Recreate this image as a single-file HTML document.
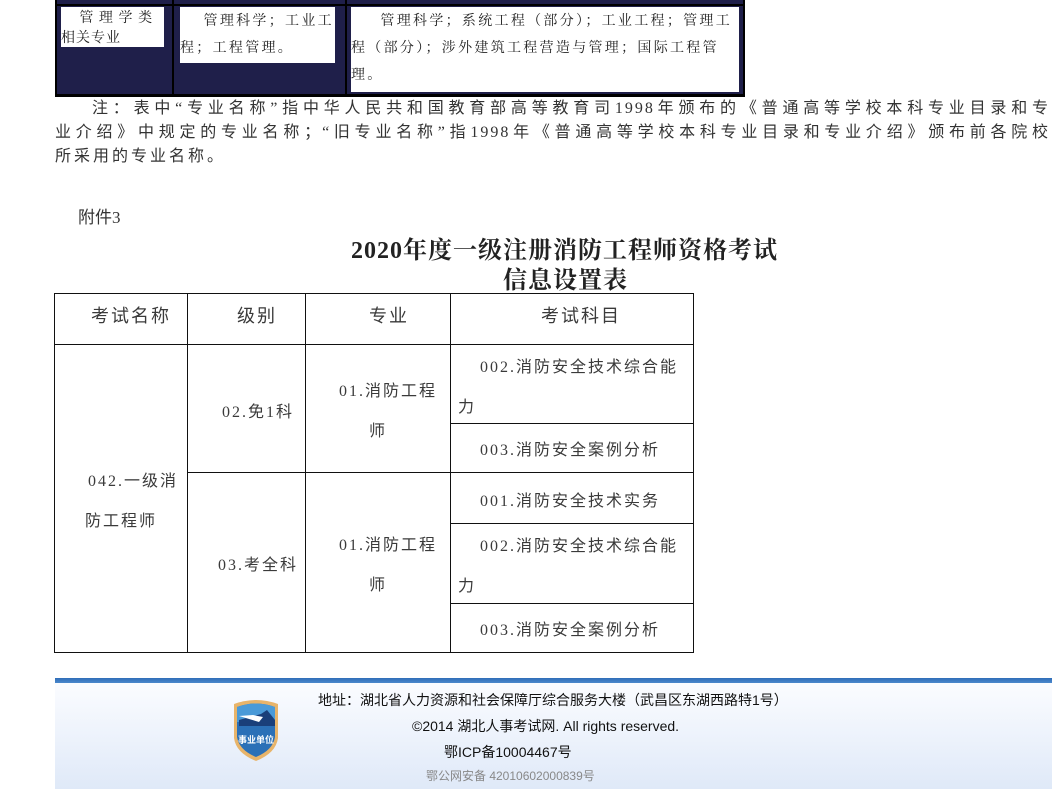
<!DOCTYPE html>
<html><head><meta charset="utf-8"><style>
*{margin:0;padding:0;box-sizing:border-box}
body{width:1059px;height:789px;background:#fff;position:relative;overflow:hidden;font-family:"Liberation Serif","Noto Sans CJK SC",serif;color:#333}
.a{position:absolute;white-space:nowrap}
.t{font-size:16px;letter-spacing:2px;color:#3a3a3a}
.l{position:absolute;background:#111}
.s{font-size:14px;letter-spacing:2.3px;color:#222;font-family:"Noto Serif CJK SC",serif}
.n{position:absolute;left:55px;font-size:16px;letter-spacing:2px;color:#333;text-align:justify;text-align-last:justify;white-space:nowrap;line-height:24px}
</style></head><body>
<div class="a" style="left:55px;top:0;width:690px;height:97px;background:#1f1f4a"></div>
<div class="a" style="left:55px;top:94px;width:690px;height:3px;background:#000"></div>
<div class="a" style="left:55px;top:4px;width:690px;height:2px;background:#000"></div>
<div class="a" style="left:55px;top:0;width:2px;height:97px;background:#000"></div>
<div class="a" style="left:172px;top:0;width:2px;height:97px;background:#000"></div>
<div class="a" style="left:345px;top:0;width:2px;height:97px;background:#000"></div>
<div class="a" style="left:743px;top:0;width:2px;height:97px;background:#000"></div>
<div class="a s" style="left:61px;top:7px;width:103px;height:40px;background:#fff;line-height:20px;letter-spacing:1px">&nbsp;&nbsp;&nbsp;&nbsp;管 理 学 类<br>相关专业</div>
<div class="a s" style="left:180px;top:7px;width:155px;height:56px;background:#fff;line-height:27px">&nbsp;&nbsp;&nbsp;&nbsp;管理科学；工业工<br>程；工程管理。</div>
<div class="a s" style="left:351px;top:7px;width:388px;height:85px;background:#fff;line-height:27px;overflow:hidden">&nbsp;&nbsp;&nbsp;&nbsp;&nbsp;管理科学；系统工程（部分）；工业工程；管理工<br>程（部分）；涉外建筑工程营造与管理；国际工程管<br>理。</div>
<div class="n" style="top:97px;left:92px;width:958px">注：表中“专业名称”指中华人民共和国教育部高等教育司1998年颁布的《普通高等学校本科专业目录和专</div>
<div class="n" style="top:121px;width:995px">业介绍》中规定的专业名称；“旧专业名称”指1998年《普通高等学校本科专业目录和专业介绍》颁布前各院校</div>
<div class="n" style="top:145px;text-align-last:auto;letter-spacing:3px">所采用的专业名称。</div>
<div class="a" style="left:78px;top:203px;font-size:17px;color:#333">附件3</div>
<div class="a" style="left:351px;top:230px;font-size:24px;letter-spacing:1px;font-weight:bold;color:#222;font-family:'Liberation Serif','Noto Serif CJK SC',serif">2020年度一级注册消防工程师资格考试</div>
<div class="a" style="left:503px;top:260px;font-size:24px;letter-spacing:1px;font-weight:bold;color:#222;font-family:'Liberation Serif','Noto Serif CJK SC',serif">信息设置表</div>
<div class="l" style="left:54px;top:293px;width:640px;height:1px"></div>
<div class="l" style="left:54px;top:344px;width:640px;height:1px"></div>
<div class="l" style="left:54px;top:652px;width:640px;height:1px"></div>
<div class="l" style="left:187px;top:472px;width:507px;height:1px"></div>
<div class="l" style="left:450px;top:423px;width:244px;height:1px"></div>
<div class="l" style="left:450px;top:523px;width:244px;height:1px"></div>
<div class="l" style="left:450px;top:603px;width:244px;height:1px"></div>
<div class="l" style="left:54px;top:293px;width:1px;height:360px"></div>
<div class="l" style="left:187px;top:293px;width:1px;height:360px"></div>
<div class="l" style="left:305px;top:293px;width:1px;height:360px"></div>
<div class="l" style="left:450px;top:293px;width:1px;height:360px"></div>
<div class="l" style="left:693px;top:293px;width:1px;height:360px"></div>
<div class="a t" style="left:91px;top:302px;font-size:18px">考试名称</div>
<div class="a t" style="left:237px;top:302px;font-size:18px">级别</div>
<div class="a t" style="left:369px;top:302px;font-size:18px">专业</div>
<div class="a t" style="left:541px;top:302px;font-size:18px">考试科目</div>
<div class="a t" style="left:88px;top:467px">042.一级消</div>
<div class="a t" style="left:85px;top:507px">防工程师</div>
<div class="a t" style="left:222px;top:398px">02.免1科</div>
<div class="a t" style="left:339px;top:377px">01.消防工程</div>
<div class="a t" style="left:369px;top:417px">师</div>
<div class="a t" style="left:480px;top:353px">002.消防安全技术综合能</div>
<div class="a t" style="left:458px;top:393px">力</div>
<div class="a t" style="left:480px;top:436px">003.消防安全案例分析</div>
<div class="a t" style="left:218px;top:551px">03.考全科</div>
<div class="a t" style="left:339px;top:531px">01.消防工程</div>
<div class="a t" style="left:369px;top:571px">师</div>
<div class="a t" style="left:480px;top:487px">001.消防安全技术实务</div>
<div class="a t" style="left:480px;top:532px">002.消防安全技术综合能</div>
<div class="a t" style="left:458px;top:572px">力</div>
<div class="a t" style="left:480px;top:616px">003.消防安全案例分析</div>
<div class="a" style="left:55px;top:678px;width:997px;height:5px;background:linear-gradient(#2f6db8,#4b88cc)"></div>
<div class="a" style="left:55px;top:683px;width:997px;height:106px;background:linear-gradient(#fbfcff,#dfe9f8)"></div>
<svg class="a" style="left:231px;top:698px" width="50" height="64" viewBox="0 0 50 64">
<path d="M3 6 Q25 -2 47 6 L47 40 Q45 55 25 63 Q5 55 3 40 Z" fill="#e8b46a"/>
<path d="M6 9 Q25 2 44 9 L44 39 Q42 52 25 59 Q8 52 6 39 Z" fill="#2b70b7"/>
<path d="M6 9 Q25 2 44 9 L44 24 L6 24 Z" fill="#4a9ad8"/>
<path d="M8 22 L30 16 L36 12 L44 22 L44 28 L8 28 Z" fill="#1a3f7a"/>
<path d="M8 18 L28 24 L32 19 L22 17 Z" fill="#fff"/>
<text x="25" y="45" font-size="9" font-weight="bold" fill="#fff" text-anchor="middle" font-family="Noto Sans CJK SC,sans-serif">事业单位</text>
</svg>
<div class="a" style="left:318px;top:690px;font-size:14px;color:#111;font-family:'Liberation Sans','Noto Sans CJK SC',sans-serif">地址：湖北省人力资源和社会保障厅综合服务大楼（武昌区东湖西路特1号）</div>
<div class="a" style="left:412px;top:716px;font-size:14px;color:#111;font-family:'Liberation Sans','Noto Sans CJK SC',sans-serif">©2014 湖北人事考试网. All rights reserved.</div>
<div class="a" style="left:444px;top:742px;font-size:14px;color:#111;font-family:'Liberation Sans','Noto Sans CJK SC',sans-serif">鄂ICP备10004467号</div>
<div class="a" style="left:426px;top:767px;font-size:12px;color:#888;font-family:'Liberation Sans','Noto Sans CJK SC',sans-serif">鄂公网安备 42010602000839号</div>
</body></html>
